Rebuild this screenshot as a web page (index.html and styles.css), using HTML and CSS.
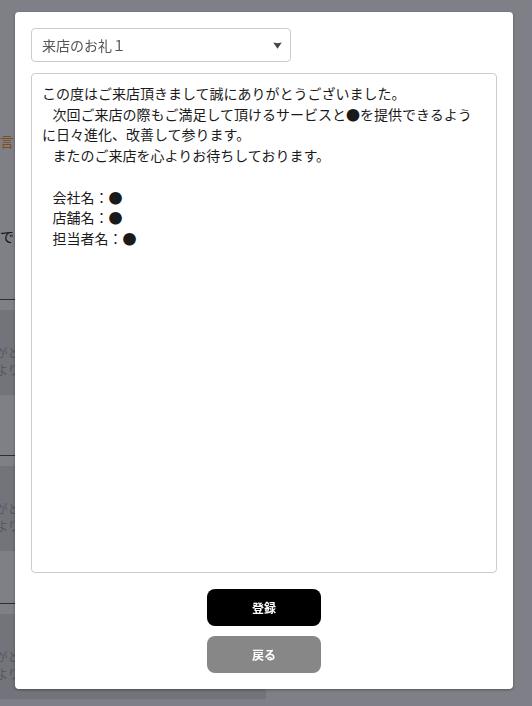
FILE: index.html
```html
<!DOCTYPE html>
<html lang="ja">
<head>
<meta charset="utf-8">
<title>テンプレート</title>
<link rel="stylesheet" href="styles.css">
</head>
<body>
<div class="page">
  <p class="notice">注意事項・文言</p>
  <p class="lead">ご利用できます。</p>
  <div class="card card-first">
    <div class="card-box">
      <p class="card-line line-a">この度はご来店頂きまして誠にありがとうございました。</p>
      <p class="card-line line-b">またのご来店を心よりお待ちしております。</p>
    </div>
  </div>
  <div class="card card-second">
    <div class="card-box">
      <p class="card-line line-a">この度はご来店頂きまして誠にありがとうございました。</p>
      <p class="card-line line-b">またのご来店を心よりお待ちしております。</p>
    </div>
  </div>
  <div class="card">
    <div class="card-box">
      <p class="card-line line-a">この度はご来店頂きまして誠にありがとうございました。</p>
      <p class="card-line line-b">またのご来店を心よりお待ちしております。</p>
    </div>
  </div>
</div>

<div class="overlay">
  <div class="modal">
    <div class="select-wrap">
      <select class="select">
        <option>来店のお礼１</option>
        <option>来店のお礼２</option>
      </select>
      <svg class="select-arrow" width="9" height="7" viewBox="0 0 9 7" aria-hidden="true">
        <path d="M0.3 0.4 L4.5 1.3 L8.7 0.4 L4.5 6.8 Z" fill="#444"/>
      </svg>
    </div>
    <textarea class="message">この度はご来店頂きまして誠にありがとうございました。
&#x2002;&#x2005;次回ご来店の際もご満足して頂けるサービスと●を提供できるよう
に日々進化、改善して参ります。
&#x2002;&#x2005;またのご来店を心よりお待ちしております。

&#x2002;&#x2005;会社名：●
&#x2002;&#x2005;店舗名：●
&#x2002;&#x2005;担当者名：●</textarea>
    <div class="actions">
      <button class="btn btn-primary" type="button">登録</button>
      <button class="btn btn-secondary" type="button">戻る</button>
    </div>
  </div>
</div>
</body>
</html>
```
FILE: styles.css
```css
html, body {
  margin: 0;
  padding: 0;
  background: #ffffff;
  font-family: "Noto Sans CJK JP", "Noto Sans", sans-serif;
}

.page {
  width: 266px;
  padding-top: 131px;
}

.notice {
  margin: 0;
  height: 20px;
  line-height: 20px;
  font-size: 14px;
  color: #ff9a1f;
  white-space: nowrap;
  text-indent: -84px;
}

.lead {
  margin: 75px 0 0;
  height: 20px;
  line-height: 20px;
  font-size: 14px;
  color: #222222;
  white-space: nowrap;
  text-indent: -42px;
}

.card {
  border-top: 1px solid #5a5a5a;
  padding-top: 10px;
}

.lead + .card {
  margin-top: 53px;
}

.card-first {
  margin-bottom: 60px;
}

.card-second {
  margin-bottom: 52px;
}

.card-box {
  height: 85px;
  box-sizing: border-box;
  padding-top: 34px;
  background: #e6e6e6;
  overflow: hidden;
}

.card-line {
  margin: 0;
  font-size: 12px;
  line-height: 17px;
  color: #b0b0b0;
  white-space: nowrap;
}

.line-a {
  text-indent: -196px;
}

.line-b {
  text-indent: -100px;
}

.overlay {
  position: fixed;
  top: 0;
  left: 0;
  right: 0;
  bottom: 0;
  background: rgba(0, 0, 16, 0.5);
  padding: 12px 19px 17px 15px;
  box-sizing: border-box;
  display: flex;
}

.modal {
  flex: 1;
  background: #ffffff;
  border-radius: 4px;
  padding: 16px;
  display: flex;
  flex-direction: column;
  box-shadow: 0 1px 3px rgba(0, 0, 0, 0.35);
}

.select-wrap {
  position: relative;
  width: 260px;
  height: 34px;
  flex: none;
}

.select {
  -webkit-appearance: none;
  appearance: none;
  width: 100%;
  height: 34px;
  margin: 0;
  box-sizing: border-box;
  border: 1px solid #cccccc;
  border-radius: 4px;
  background: #ffffff;
  padding: 0 10px;
  font-family: "Noto Sans CJK JP", "Noto Sans", sans-serif;
  font-size: 14px;
  color: #555555;
  outline: none;
}

.select-arrow {
  position: absolute;
  left: 242px;
  top: 14px;
  pointer-events: none;
}

.message {
  flex: 1;
  margin: 11px 0 0;
  width: 100%;
  box-sizing: border-box;
  border: 1px solid #cccccc;
  border-radius: 4px;
  padding: 9px 10px;
  font-family: "Noto Sans CJK JP", "Noto Sans", sans-serif;
  font-size: 14px;
  line-height: 20.7px;
  color: #1a1a1a;
  background: #ffffff;
  resize: none;
  outline: none;
  overflow: hidden;
}

.actions {
  margin-top: 16px;
  display: flex;
  flex-direction: column;
  align-items: center;
  gap: 10px;
  flex: none;
}

.btn {
  width: 114px;
  height: 37px;
  border: none;
  border-radius: 8px;
  color: #ffffff;
  font-family: "Noto Sans CJK JP", "Noto Sans", sans-serif;
  font-size: 12px;
  font-weight: 700;
  padding: 0;
  cursor: pointer;
}

.btn-primary {
  background: #000000;
}

.btn-secondary {
  background: #878787;
}
```
